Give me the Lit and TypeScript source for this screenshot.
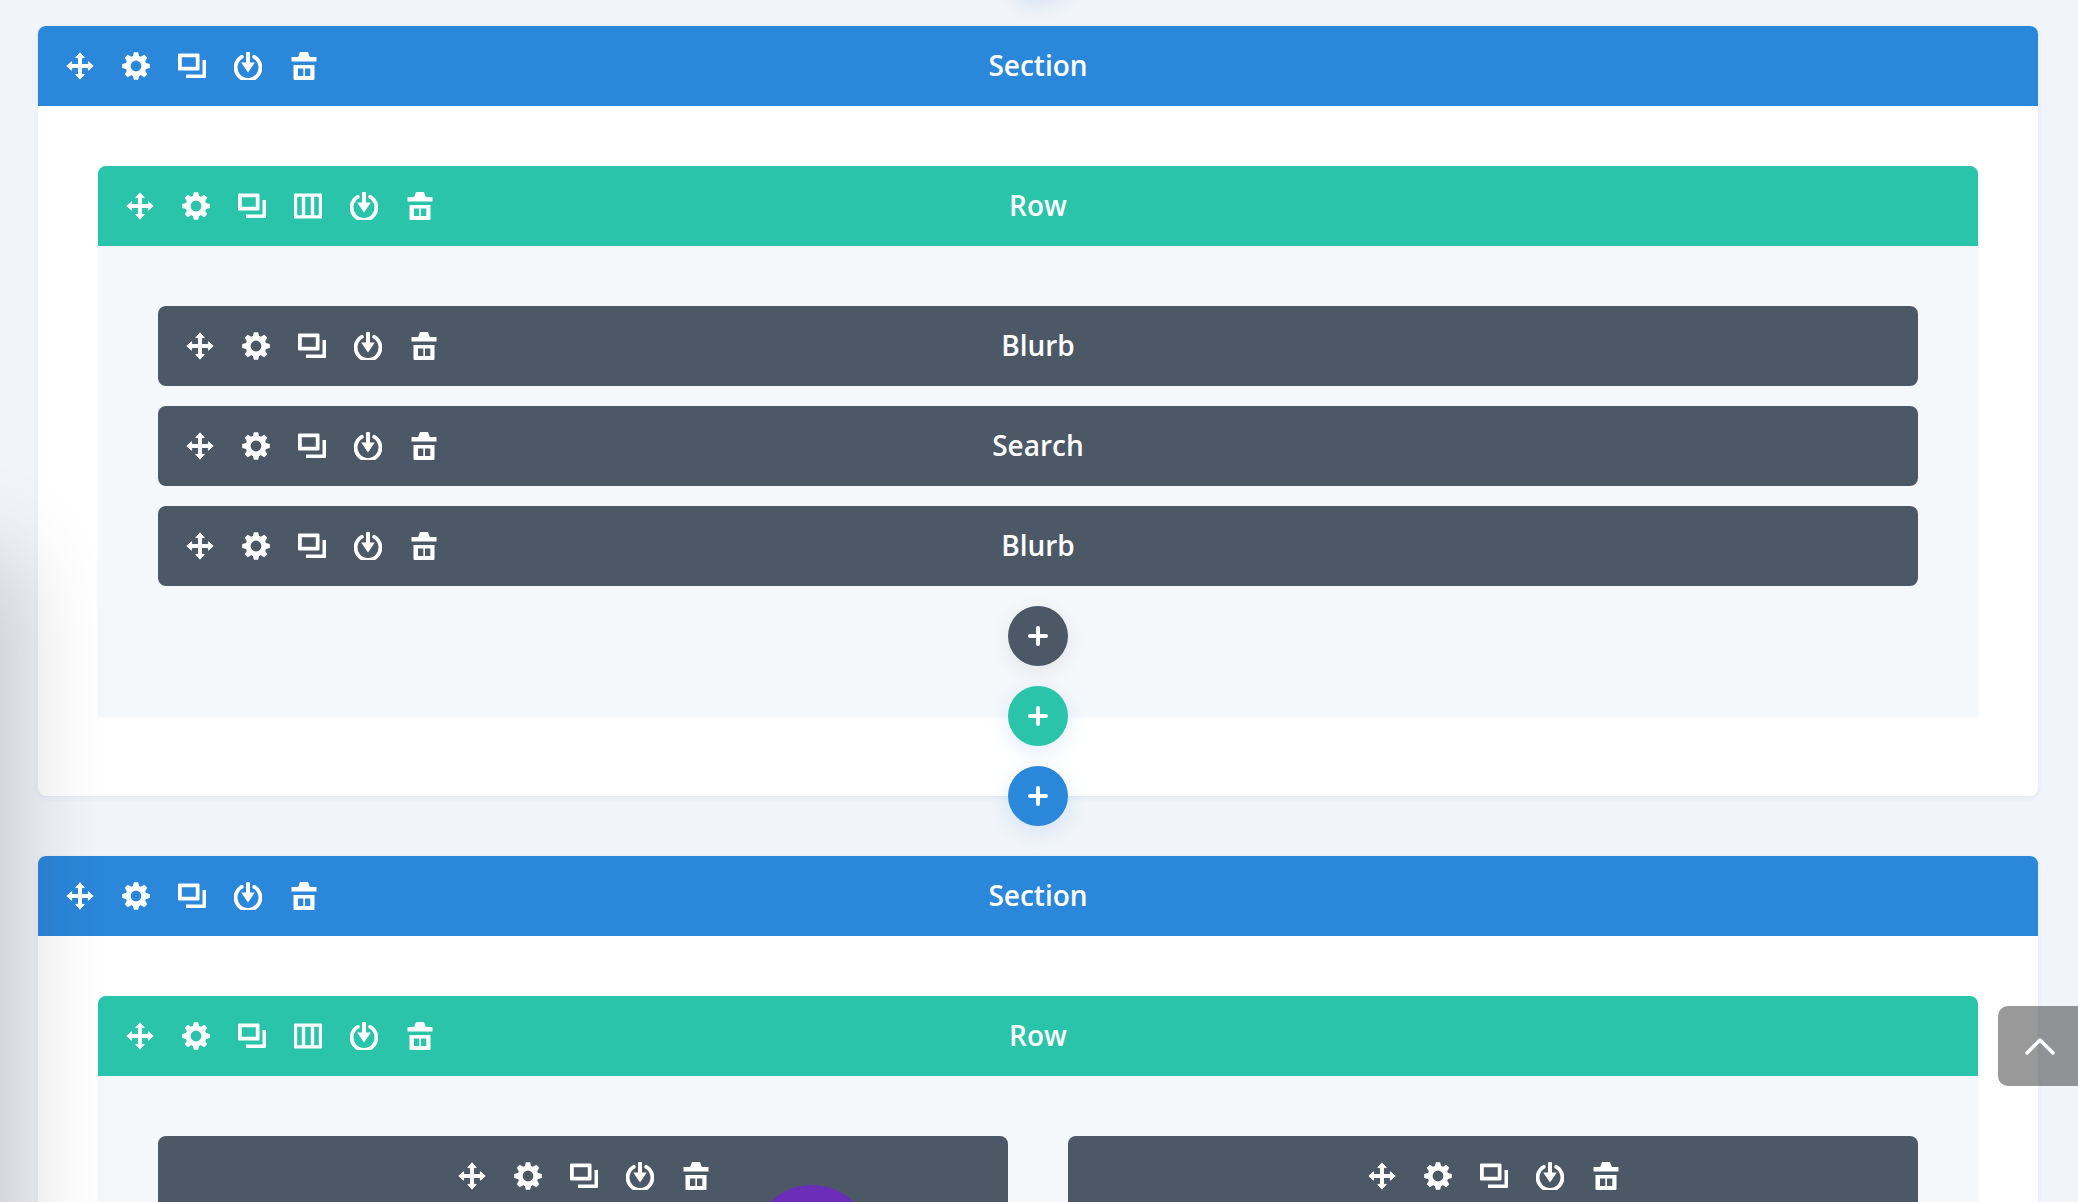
import { LitElement, html, css } from "lit";
import { customElement } from "lit/decorators.js";

const svgWrap = (markup: string) => {
  const t = document.createElement("template");
  t.innerHTML = `<svg xmlns="http://www.w3.org/2000/svg" viewBox="0 0 28 28" width="28" height="28" fill="#fff" style="display:block">${markup}</svg>`;
  return t.content.firstElementChild as Element;
};

const teeth = Array.from({ length: 8 }, (_, i) =>
  `<path d="M11.900 0.200h4.200l1.500 5.800h-7.200z" transform="rotate(${i * 45} 14 14)"/>`
).join("");

const ICONS: Record<string, string> = {
  move: `<path stroke="#fff" stroke-width="1" stroke-linejoin="round" d="M14 .8l4.200 4.800h-2.700v6.900h6.900V9.800L27.200 14l-4.800 4.200v-2.700h-6.900v6.900h2.700L14 27.200l-4.200-4.800h2.700v-6.900H5.600v2.700L.8 14l4.800-4.200v2.700h6.900V5.600H9.800z"/>`,
  gear: `<circle cx="14" cy="14" r="7.900" fill="none" stroke="#fff" stroke-width="5"/>${teeth}`,
  copy: `<path fill-rule="evenodd" d="M0 2.500a1 1 0 0 1 1-1h19.500a1 1 0 0 1 1 1v15a1 1 0 0 1-1 1H1a1 1 0 0 1-1-1zM3.800 5.200v9.600h14V5.200z"/><path d="M24.500 8H28v17a1 1 0 0 1-1 1H8v-3.500h16.500z"/>`,
  cols: `<path fill-rule="evenodd" d="M1 1.500h26a1 1 0 0 1 1 1v23a1 1 0 0 1-1 1H1a1 1 0 0 1-1-1v-23a1 1 0 0 1 1-1zM3.200 4.700v18.600h4.600V4.700zM11.200 4.700v18.600h5.600V4.700zM20.200 4.700v18.600h4.600V4.700z"/>`,
  port: `<path d="M7.800 4.800A12.400 12.400 0 1 0 20.200 4.800" fill="none" stroke="#fff" stroke-width="3.800" stroke-linecap="round"/><path d="M12 1.500a2 2 0 0 1 4 0V10.500h4.800L14 20.500l-6.800-10H12z"/>`,
  trash: `<path d="M10 0h8l1.800 5H26a.5.5 0 0 1 .5.5v4H1.500v-4A.5.5 0 0 1 2 5h6.200z"/><path fill-rule="evenodd" d="M3.500 13h21v14a1 1 0 0 1-1 1h-19a1 1 0 0 1-1-1zM8 16.500V24h5.300v-7.500zM15 16.500V24h5.300v-7.500z"/>`,
};

const icon = (name: string) => html`<span class="btn">${svgWrap(ICONS[name])}</span>`;
const tools = (cols = false) => html`
  <div class="tools">
    ${icon("move")}${icon("gear")}${icon("copy")}${cols ? icon("cols") : ""}${icon("port")}${icon("trash")}
  </div>`;

const plus = (cls: string) => html`
  <div class="add ${cls}">
    <svg viewBox="0 0 20 20" width="20" height="20" fill="none" stroke="#fff" stroke-width="4" stroke-linecap="round"><path d="M10 2v16M2 10h16"/></svg>
  </div>`;

@customElement("app-root")
export class AppRoot extends LitElement {
  static styles = css`
    :host {
      display: block;
      position: relative;
      height: 1202px;
      overflow: hidden;
      background: #f1f4f9;
      font-family: "Open Sans", sans-serif;
      color: #fff;
    }
    .page {
      display: flex;
      flex-direction: column;
      gap: 60px;
      padding: 26px 40px 0 38px;
    }
    .section {
      position: relative;
      background: #fff;
      border-radius: 8px;
      box-shadow: 0 2px 5px rgba(43, 135, 218, 0.08);
    }
    .bar {
      position: relative;
      display: flex;
      align-items: center;
      height: 80px;
      font-size: 28px;
      font-weight: 600;
    }
    .bar .label {
      position: absolute;
      left: 0;
      right: 0;
      text-align: center;
      line-height: 78px;
      height: 80px;
    }
    .tools {
      position: relative;
      z-index: 1;
      display: flex;
      padding-left: 14px;
    }
    .btn {
      display: flex;
      align-items: center;
      justify-content: center;
      width: 56px;
      height: 56px;
    }
    .s-bar { background: #2b87da; border-radius: 8px 8px 0 0; }
    .r-bar { background: #29c4a9; border-radius: 8px 8px 0 0; }
    .m-bar { background: #4c5866; border-radius: 8px; }
    .s-body { padding: 60px 60px 80px; }
    .row { position: relative; background: #f5f8fb; border-radius: 8px 8px 0 0; box-shadow: 0 1px 3px rgba(43, 135, 218, 0.08); }
    .r-body {
      display: flex;
      flex-direction: column;
      gap: 20px;
      padding: 60px 60px 50px;
    }
    .add {
      width: 60px;
      height: 60px;
      border-radius: 50%;
      display: flex;
      align-items: center;
      justify-content: center;
      box-shadow: 0 5px 20px rgba(43, 135, 218, 0.16);
    }
    .add-d { background: #4c5866; align-self: center; box-shadow: 0 5px 20px rgba(0, 0, 0, 0.08); }
    .add-g, .add-b { position: absolute; left: 50%; bottom: -30px; margin-left: -30px; z-index: 2; }
    .add-g { background: #29c4a9; }
    .add-b { background: #2b87da; }
    .add-top { position: absolute; left: 50%; top: -86px; margin-left: -30px; background: #2b87da; }
    .two {
      display: grid;
      grid-template-columns: 1fr 1fr;
      gap: 60px;
    }
    .two .tools { margin: 0 auto; padding: 0 0 0 2px; }
    .tall { height: 200px; align-items: flex-start; }
    .tall .tools { margin-top: 12px; }
    .purple {
      position: absolute;
      left: 752px;
      top: 1185px;
      width: 120px;
      height: 120px;
      border-radius: 50%;
      background: #6c2eb9;
    }
    .totop {
      position: absolute;
      left: 1998px;
      right: 0;
      top: 1006px;
      height: 80px;
      border-radius: 10px 0 0 10px;
      background: rgba(0, 0, 0, 0.4);
      display: flex;
      align-items: center;
      justify-content: center;
      padding-left: 4px;
    }
    .edge {
      position: absolute;
      left: -60px;
      width: 60px;
      top: 560px;
      height: 900px;
      box-shadow: 0 0 100px rgba(0, 0, 0, 0.3);
      pointer-events: none;
    }
  `;

  render() {
    return html`
      <div class="page">
        <section class="section">
          <div class="bar s-bar">${tools()}<span class="label">Section</span></div>
          <div class="s-body">
            <div class="row">
              <div class="bar r-bar">${tools(true)}<span class="label">Row</span></div>
              <div class="r-body">
                ${["Blurb", "Search", "Blurb"].map(
                  (t) => html`<div class="bar m-bar">${tools()}<span class="label">${t}</span></div>`
                )}
                ${plus("add-d")}
              </div>
              ${plus("add-g")}
            </div>
          </div>
          ${plus("add-b")}
          ${plus("add-top")}
        </section>
        <section class="section">
          <div class="bar s-bar">${tools()}<span class="label">Section</span></div>
          <div class="s-body">
            <div class="row">
              <div class="bar r-bar">${tools(true)}<span class="label">Row</span></div>
              <div class="r-body">
                <div class="two">
                  <div class="bar m-bar tall">${tools()}</div>
                  <div class="bar m-bar tall">${tools()}</div>
                </div>
              </div>
            </div>
          </div>
        </section>
      </div>
      <div class="purple"></div>
      <div class="totop">
        <svg viewBox="0 0 30 18" width="30" height="18" fill="none" stroke="#fff" stroke-width="3.500" stroke-linecap="round" stroke-linejoin="round"><path d="M2 16L15 3l13 13"/></svg>
      </div>
      <div class="edge"></div>
    `;
  }
}
